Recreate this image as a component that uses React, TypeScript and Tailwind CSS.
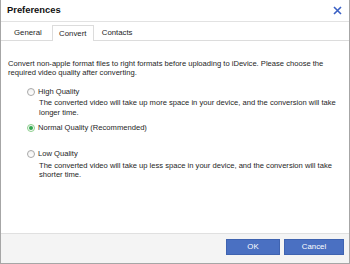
import { useState } from "react";

type Option = {
  id: string;
  label: string;
  gap: string;
  desc?: string[];
};

const options: Option[] = [
  {
    id: "high",
    label: "High Quality",
    gap: "mt-[9px]",
    desc: [
      "The converted video will take up more space in your device, and the conversion will take",
      "longer time.",
    ],
  },
  { id: "normal", label: "Normal Quality (Recommended)", gap: "mt-[6px]" },
  {
    id: "low",
    label: "Low Quality",
    gap: "mt-[16px]",
    desc: [
      "The converted video will take up less space in your device, and the conversion will take",
      "shorter time.",
    ],
  },
];

const Radio = ({ checked }: { checked: boolean }) => (
  <span
    className={`w-[8px] h-[8px] rounded-full border flex items-center justify-center bg-gradient-to-b from-[#f2f2f2] to-white ${
      checked ? "border-[#8ccf8c]" : "border-[#a8a8a8]"
    }`}
  >
    {checked && <span className="w-[4px] h-[4px] rounded-full bg-[#2fa84f]" />}
  </span>
);

const App = () => {
  const [quality, setQuality] = useState("normal");

  return (
    <div className="w-[350px] h-[264px] flex flex-col bg-white border-x border-b border-[#a6a6a6] text-[#1e1e1e] font-['Liberation_Sans',Arial,sans-serif] text-[7.6px]">
      {/* Title bar */}
      <div className="h-[22px] flex items-center justify-between pl-[6px] pr-[7px] border-b border-[#e2e2e2]">
        <span className="font-bold text-[9.4px] text-[#111]">Preferences</span>
        <svg width="9" height="9" viewBox="0 0 9 9">
          <path d="M1 1L8 8M8 1L1 8" stroke="#3a60c4" strokeWidth="1.6" />
        </svg>
      </div>

      {/* Tabs */}
      <div className="h-[19px] flex items-end pl-[13px] border-b border-[#dcdcdc] text-[7.8px]">
        <div className="h-[15px] flex items-center">General</div>
        <div className="w-[42px] h-[16px] -mb-px ml-[10px] flex items-center justify-center bg-white border-x border-t border-[#dcdcdc]">
          Convert
        </div>
        <div className="h-[15px] flex items-center ml-[8px]">Contacts</div>
      </div>

      {/* Content */}
      <div className="flex-1 px-[7px] pt-[18px] leading-[9.4px]">
        <p>
          Convert non-apple format files to right formats before uploading to iDevice. Please choose the
          <br />
          required video quality after converting.
        </p>
        <div className="pl-[19px] flex flex-col">
          {options.map((o) => (
            <div key={o.id} onClick={() => setQuality(o.id)} className={`cursor-pointer ${o.gap}`}>
              <div className="flex items-center gap-[3px] h-[10px]">
                <Radio checked={quality === o.id} />
                <span>{o.label}</span>
              </div>
              {o.desc && (
                <div className="pl-[12px] pt-[1.5px]">
                  {o.desc.map((d) => (
                    <div key={d}>{d}</div>
                  ))}
                </div>
              )}
            </div>
          ))}
        </div>
      </div>

      {/* Footer */}
      <div className="h-[30px] bg-[#f4f4f4] border-t border-[#e0e0e0] flex items-start justify-end gap-[4px] pt-[5px] pr-[5px]">
        <button className="w-[54px] h-[16px] bg-[#4a70c2] text-white text-[7.8px] border border-[#3f63b0]">
          OK
        </button>
        <button className="w-[60px] h-[16px] bg-[#4a70c2] text-white text-[7.8px] border border-[#3f63b0]">
          Cancel
        </button>
      </div>
    </div>
  );
};

export default App;
